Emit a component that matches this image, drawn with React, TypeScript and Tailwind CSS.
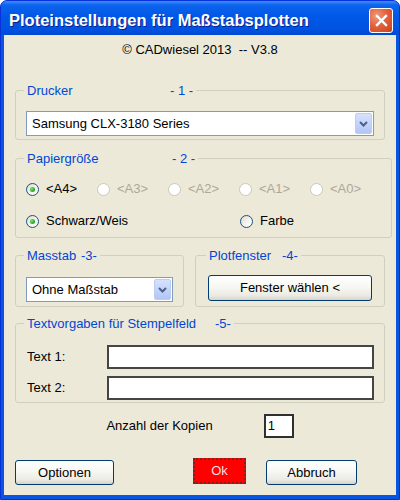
import React from 'react';

type RadioProps = {
  label: string;
  checked?: boolean;
  disabled?: boolean;
};

function Radio({ label, checked, disabled }: RadioProps) {
  return (
    <div className="flex h-[16px] items-center gap-[7px]">
      <span
        className={
          disabled
            ? 'flex h-[13px] w-[13px] items-center justify-center rounded-full border border-[#cac8bb] bg-white'
            : 'flex h-[13px] w-[13px] items-center justify-center rounded-full border border-[#1c5180] bg-[linear-gradient(135deg,#dcdbd5_0%,#f4f4f0_55%,#ffffff_100%)]'
        }
      >
        {checked && (
          <span className="h-[5px] w-[5px] rounded-full bg-[radial-gradient(circle_at_35%_35%,#7ee07a_0%,#2fb02c_55%,#1a8f18_100%)]" />
        )}
      </span>
      <span className={disabled ? 'text-[#aca899]' : 'text-black'}>{label}</span>
    </div>
  );
}

function Dropdown({ value }: { value: string }) {
  return (
    <div className="flex h-[25px] items-stretch border border-[#7f9db9] bg-white">
      <span className="flex flex-1 items-center pl-[5px]">{value}</span>
      <span className="m-[1px] flex w-[17px] items-center justify-center rounded-[2px] border border-[#bccdf4] bg-[linear-gradient(180deg,#d6e2fd_0%,#c3d4fb_50%,#b2c6f5_100%)]">
        <svg width="9" height="6" viewBox="0 0 9 6">
          <path d="M1 1 L4.5 4.5 L8 1" fill="none" stroke="#4d6185" strokeWidth="2" />
        </svg>
      </span>
    </div>
  );
}

function XpButton({ label, width }: { label: string; width: string }) {
  return (
    <button
      className={`h-[25px] ${width} rounded-[3px] border border-[#003c74] bg-[linear-gradient(180deg,#ffffff_0%,#f7f7f3_45%,#ecebe4_80%,#d8d3c6_100%)] text-[13px] text-black`}
    >
      {label}
    </button>
  );
}

function Legend({ first, second, firstWidth }: { first: string; second: string; firstWidth: string }) {
  return (
    <legend className="ml-[-2px] px-[3px] text-[13px] leading-[15px] text-[#0046d5]">
      <span className={`inline-block ${firstWidth}`}>{first}</span>
      <span>{second}</span>
    </legend>
  );
}

export default function App() {
  return (
    <div className="h-[500px] w-[400px] bg-white font-['Liberation_Sans',Arial,sans-serif] text-[13px] text-black">
      <div className="flex h-full flex-col overflow-hidden rounded-t-[7px] border border-[#0831d9] bg-[#0855e2]">
        <div className="flex h-[34px] shrink-0 items-center justify-between bg-[linear-gradient(180deg,#3d8ff8_0%,#0c63ed_12%,#0058e6_45%,#0054e2_80%,#0049d3_100%)] pl-[8px] pr-[6px] pt-[4px]">
          <span className="pt-[1px] text-[16.5px] font-bold text-white [text-shadow:1px_1px_#0a1f8f]">
            Ploteinstellungen für Maßstabsplotten
          </span>
          <span className="flex h-[25px] w-[24px] items-center justify-center rounded-[3px] border border-white bg-[radial-gradient(circle_at_30%_30%,#ef9a7c_0%,#e3623e_45%,#c9401c_100%)]">
            <svg width="13" height="13" viewBox="0 0 13 13">
              <path d="M2 2 L11 11 M11 2 L2 11" stroke="white" strokeWidth="2.4" strokeLinecap="square" />
            </svg>
          </span>
        </div>

        <div className="mx-[3px] mb-[4px] flex flex-1 flex-col bg-[#ece9d8] px-[11px]">
          <div className="pt-[7px] text-center leading-[16px] whitespace-pre">© CADwiesel 2013  -- V3.8</div>

          <fieldset className="mt-[25px] rounded-[3px] border border-[#d0d0bf] px-[10px] pb-[3px] pt-[13px]">
            <Legend first="Drucker" second="- 1 -" firstWidth="w-[143px]" />
            <Dropdown value="Samsung CLX-3180 Series" />
          </fieldset>

          <fieldset className="mt-[11px] rounded-[3px] border border-[#d0d0bf] px-[10px] pb-[8px] pt-[15px]">
            <Legend first="Papiergröße" second="- 2 -" firstWidth="w-[145px]" />
            <div className="grid grid-cols-[repeat(5,71px)] gap-y-[16px]">
              <Radio label="<A4>" checked />
              <Radio label="<A3>" disabled />
              <Radio label="<A2>" disabled />
              <Radio label="<A1>" disabled />
              <Radio label="<A0>" disabled />
              <div className="col-span-3">
                <Radio label="Schwarz/Weis" checked />
              </div>
              <div className="col-span-2 pl-[1px]">
                <Radio label="Farbe" />
              </div>
            </div>
          </fieldset>

          <div className="mt-[10px] flex gap-[11px]">
            <fieldset className="w-[169px] rounded-[3px] border border-[#d0d0bf] px-[10px] pb-[4px] pt-[14px]">
              <Legend first="Masstab" second="-3-" firstWidth="w-[54px]" />
              <Dropdown value="Ohne Maßstab" />
            </fieldset>
            <fieldset className="flex-1 rounded-[3px] border border-[#d0d0bf] px-[12px] pb-[4px] pt-[12px]">
              <Legend first="Plotfenster" second="-4-" firstWidth="w-[73px]" />
              <button className="h-[26px] w-full rounded-[3px] border border-[#003c74] bg-[linear-gradient(180deg,#ffffff_0%,#f7f7f3_45%,#ecebe4_80%,#d8d3c6_100%)] text-[13px] text-black">
                Fenster wählen &lt;
              </button>
            </fieldset>
          </div>

          <fieldset className="mt-[9px] rounded-[3px] border border-[#d0d0bf] px-[10px] pb-[2px] pt-[14px]">
            <Legend first="Textvorgaben für Stempelfeld" second="-5-" firstWidth="w-[188px]" />
            <div className="flex flex-col gap-[7px]">
              <div className="flex items-center">
                <span className="w-[81px] pl-[1px]">Text 1:</span>
                <div className="h-[24px] flex-1 border-2 border-[#454545] bg-white" />
              </div>
              <div className="flex items-center">
                <span className="w-[81px] pl-[1px]">Text 2:</span>
                <div className="h-[24px] flex-1 border-2 border-[#454545] bg-white" />
              </div>
            </div>
          </fieldset>

          <div className="mt-[11px] flex items-center justify-center gap-[51px]">
            <span>Anzahl der Kopien</span>
            <div className="flex h-[24px] w-[30px] items-center border-2 border-[#303030] bg-white pl-[2px]">1</div>
          </div>

          <div className="mt-[20px] flex items-start">
            <div className="mt-[2px]">
              <XpButton label="Optionen" width="w-[99px]" />
            </div>
            <button className="ml-[79px] h-[26px] w-[53px] border-2 border-dotted border-[#7a2424] bg-[#ff0000] text-[13px] text-[#ffdede]">
              Ok
            </button>
            <div className="ml-[20px] mt-[2px]">
              <XpButton label="Abbruch" width="w-[91px]" />
            </div>
          </div>
        </div>
      </div>
    </div>
  );
}
